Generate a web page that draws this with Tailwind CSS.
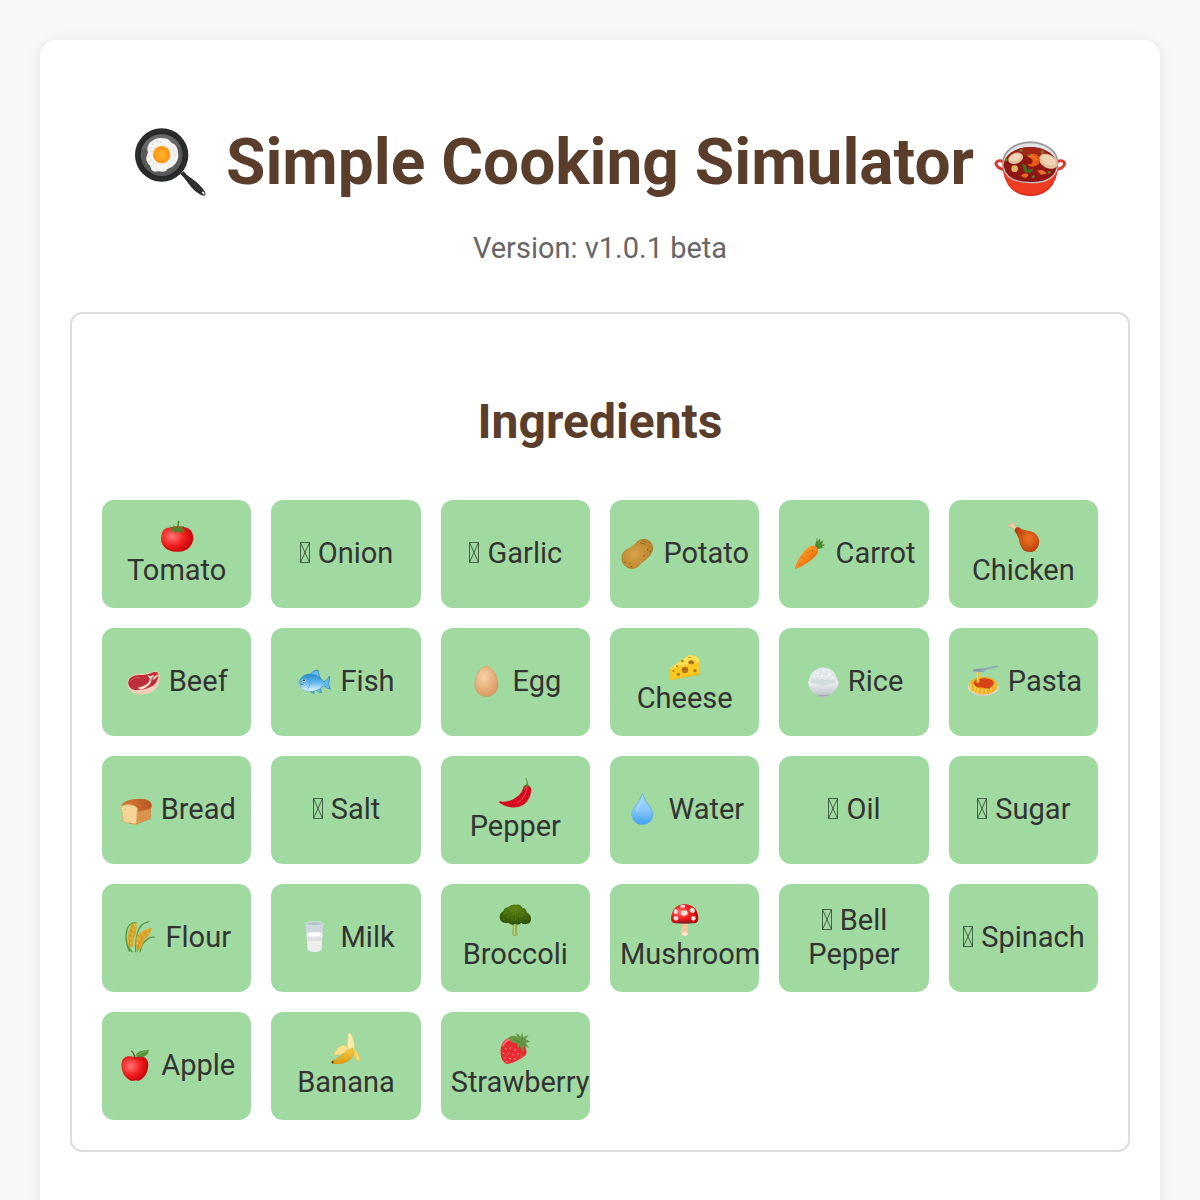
<!DOCTYPE html>
<html lang="en">
<head>
  <meta charset="UTF-8" />
  <meta name="viewport" content="width=device-width, initial-scale=1.0" />
  <title>Simple Cooking Simulator</title>
  <script src="https://cdn.jsdelivr.net/npm/@tailwindcss/browser@4"></script>
</head>
<body class="bg-[#f8f8f8] p-10 font-['Roboto',sans-serif] text-[#333333]">

  <!-- SHARED GRADIENTS AND THE BLANK GLYPH -->
  <svg class="absolute h-0 w-0" aria-hidden="true">
    <defs>
      <radialGradient id="red" cx=".35" cy=".4" r=".7"><stop offset="0" stop-color="#ff7775" /><stop offset=".55" stop-color="#ee1b1b" /><stop offset="1" stop-color="#bd0008" /></radialGradient>
      <radialGradient id="yolk"><stop offset="0" stop-color="#ffb52b" /><stop offset="1" stop-color="#ff9411" /></radialGradient>
      <radialGradient id="potato" cx=".4" cy=".5" r=".6"><stop offset="0" stop-color="#d6a24a" /><stop offset="1" stop-color="#b9822b" /></radialGradient>
      <linearGradient id="carrot" x1="0" y1="0" x2="1" y2="1"><stop offset=".3" stop-color="#ff9b24" /><stop offset=".8" stop-color="#e4650c" /></linearGradient>
      <radialGradient id="leg" cx=".55" cy=".45" r=".6"><stop offset="0" stop-color="#ee7524" /><stop offset="1" stop-color="#b63c08" /></radialGradient>
      <linearGradient id="fish" x1="0" y1="0" x2="0" y2="1"><stop offset="0" stop-color="#2589cf" /><stop offset=".5" stop-color="#62b9ef" /><stop offset="1" stop-color="#eefaff" /></linearGradient>
      <radialGradient id="egg" cx=".4" cy=".35" r=".7"><stop offset="0" stop-color="#f9d0a3" /><stop offset="1" stop-color="#d99760" /></radialGradient>
      <linearGradient id="bowl" x1="0" y1="0" x2="0" y2="1"><stop offset="0" stop-color="#f1f2f5" /><stop offset="1" stop-color="#b8bcc3" /></linearGradient>
      <linearGradient id="drop" x1="0" y1="0" x2="0" y2="1"><stop offset="0" stop-color="#a3d5fa" /><stop offset=".5" stop-color="#8dcbfb" /><stop offset="1" stop-color="#429fee" /></linearGradient>
      <radialGradient id="broccoli" cx=".5" cy=".2" r=".8"><stop offset="0" stop-color="#628412" /><stop offset="1" stop-color="#2d5108" /></radialGradient>
      <linearGradient id="banana" x1="0" y1="0" x2="0" y2="1"><stop offset="0" stop-color="#f8cc3f" /><stop offset="1" stop-color="#dc9b13" /></linearGradient>
      <linearGradient id="crust" x1="0" y1="0" x2="1" y2="0"><stop offset="0" stop-color="#d47d3b" /><stop offset="1" stop-color="#b95320" /></linearGradient>
      <symbol id="blank" viewBox="0 0 12 21"><path d="M1.5 .5h9v20h-9zM1.5 .5l9 20M10.500 .5l-9 20" fill="none" stroke="#2f4430" stroke-width=".8" /></symbol>
    </defs>
  </svg>

  <main class="rounded-2xl bg-white px-[30px] pt-[83px] pb-20 text-center shadow-[0_4px_16px_rgba(0,0,0,0.1)]">
    <h1 class="text-[64px] leading-[80px] font-bold text-[#5a3e2b]">
      <svg class="inline-block h-[72px] w-20 align-[-14px]" viewBox="0 0 240 216" aria-hidden="true">
        <path d="M151 143l10-7q8 12 22 20 27 18 42 41 5 13-6 12-25-9-45-38-10-15-23-28z" fill="#2b2d2e" />
        <path d="M169 153q26 18 41 39" fill="none" stroke="#3f4243" stroke-width="2" />
        <ellipse cx="220" cy="201" rx="3" ry="5" fill="#fff" transform="rotate(-30 220 201)" />
        <circle cx="95" cy="87" r="80" fill="#252728" />
        <circle cx="95" cy="87" r="73" fill="none" stroke="#323536" stroke-width="3" />
        <circle cx="95" cy="87" r="63" fill="#59595a" />
        <path d="M36 68a63 63 0 0 1 116-8l-36 8z" fill="#777" opacity=".5" />
        <path d="M67 44q9-9 25-8 19 1 24 5 9 11 17 14 11 10 11 25 4 18-7 32-9 13-25 17-3 8-14 8-15-3-23 0-11-1-12-10-1-8-8-13-9-11-5-24 6-10 2-20 1-18 15-26z" fill="#f5f3f1" />
        <g fill="#a6a3a3">
          <circle cx="67" cy="54" r="1.500" /><circle cx="80" cy="47" r="1.500" /><circle cx="60" cy="64" r="1.500" /><circle cx="57" cy="89" r="1.500" /><circle cx="63" cy="101" r="1.500" /><circle cx="71" cy="113" r="1.500" /><circle cx="58" cy="108" r="1.500" /><circle cx="92" cy="48" r="1.500" /><circle cx="131" cy="73" r="1.500" /><circle cx="134" cy="87" r="1.500" /><circle cx="66" cy="76" r="1.500" />
        </g>
        <circle cx="95" cy="86" r="26" fill="url(#yolk)" />
      </svg>
      Simple Cooking Simulator
      <svg class="inline-block h-[72px] w-20 align-[-14px]" viewBox="3 3 240 216" aria-hidden="true">
        <path d="M44 109q-20-6-23 6 1 15 29 19M204 109q20-6 23 6-1 15-29 19" fill="none" stroke="#d83b2c" stroke-width="9" />
        <path d="M40 108q-1 59 30 86 23 19 54 19t54-19q31-27 30-86z" fill="#d92a1b" />
        <path d="M46 146q6 34 33 51 47 23 90-1 26-20 33-50-78 52-156 0z" fill="#f03c23" />
        <ellipse cx="124" cy="111" rx="84" ry="62" fill="#989b9c" />
        <ellipse cx="124" cy="114" rx="80" ry="59" fill="#e5e3e3" />
        <ellipse cx="124" cy="120" rx="80" ry="54" fill="#8d1615" />
        <path d="M54 100q26-33 68-33 44 0 71 32-34-10-66-8-40-1-73 9z" fill="#a42618" />
        <ellipse cx="80" cy="100" rx="23" ry="16" fill="#e4c2a0" transform="rotate(-22 80 100)" />
        <ellipse cx="79" cy="97" rx="17" ry="10" fill="#efd4b5" transform="rotate(-22 79 97)" />
        <ellipse cx="178" cy="109" rx="30" ry="20" fill="#e4c2a0" transform="rotate(28 178 109)" />
        <ellipse cx="179" cy="106" rx="23" ry="13" fill="#efd4b5" transform="rotate(28 179 106)" />
        <path d="M113 94q22-17 38 2 7 25-20 29-15-2-14-8 14 2 14-9-4-10-18-14z" fill="#e45b17" />
        <path d="M120 96q18-7 24 10" fill="none" stroke="#f5792a" stroke-width="4" />
        <circle cx="77" cy="131" r="10" fill="#dfb564" />
        <path d="M98 117l12 3 5 14 19-1-9 11-18-3z" fill="#41701c" />
        <path d="M95 153q15-15 24-3l-9 9zM145 138q17-9 28 8l-17 3z" fill="#e86c26" />
        <g fill="#658b26"><circle cx="97" cy="77" r="4" /><circle cx="160" cy="81" r="5" /><circle cx="52" cy="104" r="4" /><circle cx="133" cy="155" r="4" /><circle cx="118" cy="91" r="3" /><circle cx="181" cy="142" r="4" /></g>
        <path d="M43 127q9 45 81 46t81-46" fill="none" stroke="#c5bfbf" stroke-width="4" />
      </svg>
    </h1>
    <p class="mt-5 text-[29px] leading-[50px] text-[#666666]">Version: v1.0.1 beta</p>

    <!-- INGREDIENTS -->
    <section class="mt-[39px] rounded-xl border-2 border-[#dddddd] px-[30px] pt-[78px] pb-[30px]">
      <h2 class="text-[48px] leading-[60px] font-bold text-[#5a3e2b]">Ingredients</h2>
      <div class="mt-12 grid grid-cols-6 gap-5 text-[29px] leading-[34px]">
        <button class="h-[108px] rounded-xl bg-[#a1daa1] px-[10px] pb-[3px]">
          <svg class="inline-block h-8 w-9 align-[-6px]" viewBox="0 0 108 96" aria-hidden="true">
            <path d="M35 22Q8 22 6 53q0 25 20 36 29 13 57 0 20-12 20-37-2-28-29-31-20-5-39 1z" fill="url(#red)" />
            <path d="M57 2l4 1-2 19 17-4-8 8 15 8-18-2 3 9-13-8-7 10-2-10-16 3 11-8-10-9 14 4-3-9 12 10z" fill="#4b8428" />
          </svg>
          Tomato
        </button>
        <button class="h-[108px] rounded-xl bg-[#a1daa1] px-[10px] pb-[3px]"><svg class="inline-block h-[21px] w-3 align-baseline" aria-hidden="true"><use href="#blank" /></svg> Onion</button>
        <button class="h-[108px] rounded-xl bg-[#a1daa1] px-[10px] pb-[3px]"><svg class="inline-block h-[21px] w-3 align-baseline" aria-hidden="true"><use href="#blank" /></svg> Garlic</button>
        <button class="h-[108px] rounded-xl bg-[#a1daa1] px-[10px] pb-[3px]">
          <svg class="inline-block h-8 w-9 align-[-6px]" viewBox="0 0 108 96" aria-hidden="true">
            <path d="M54 12q18-12 35 0 14 13 8 31-5 13-22 27-13 8-18 16-15 14-34 6Q1 81 6 55q3-14 22-22 14-6 26-21z" fill="url(#potato)" stroke="#9b681b" />
            <path d="M60 17l16 4M67 11l11 5" stroke="#80551c" stroke-width="2" />
            <g fill="#79511b"><circle cx="83" cy="38" r="2" /><circle cx="72" cy="57" r="2" /><circle cx="15" cy="76" r="2" /><circle cx="29" cy="78" r="1.500" /><circle cx="34" cy="89" r="2" /><circle cx="91" cy="44" r="2" /></g>
          </svg>
          Potato
        </button>
        <button class="h-[108px] rounded-xl bg-[#a1daa1] px-[10px] pb-[3px]">
          <svg class="inline-block h-8 w-9 align-[-6px]" viewBox="0 0 108 96" aria-hidden="true">
            <path d="M68 30L75 3l3 14 6-14 2 14 9-9-5 15 8-2-9 9 8 2-21 5z" fill="#529332" />
            <path d="M71 30L82 7M73 32l17-20M75 33l22-9" stroke="#336e1d" stroke-width="2" />
            <path d="M50 30q14-9 24 1 9 9 0 22Q55 76 12 96q-5 0-3-5 14-40 41-61z" fill="url(#carrot)" />
            <path d="M40 44l9 6M28 60l8 5M61 61l-8-7M20 81l7 2" stroke="#d96a14" stroke-width="2" />
            <circle cx="61" cy="41" r="2" fill="#a04710" />
          </svg>
          Carrot
        </button>
        <button class="h-[108px] rounded-xl bg-[#a1daa1] px-[10px] pb-[3px]">
          <svg class="inline-block h-8 w-9 align-[-6px]" viewBox="0 0 108 96" aria-hidden="true">
            <path d="M9 16q1-7 9-4 5-9 10-1 3 8 15 17l-9 8Q25 23 15 22q-6-1-6-6z" fill="#edc8a6" stroke="#c69b77" />
            <path d="M35 22q10-1 14 6l24 5q24 4 30 29-1 27-22 34-22 1-29-9-10-15-11-31-6-15-12-22-1-9 6-12z" fill="url(#leg)" />
            <path d="M49 36q0 16 5 29" fill="none" stroke="#c04a10" stroke-width="3" />
          </svg>
          Chicken
        </button>

        <button class="h-[108px] rounded-xl bg-[#a1daa1] px-[10px] pb-[3px]">
          <svg class="inline-block h-8 w-9 align-[-6px]" viewBox="0 0 108 96" aria-hidden="true">
            <path d="M5 55q-1-22 28-28 27 1 40-5 9-3 18-3 12 3 9 23 2 29-31 43-27 7-46-1Q3 75 5 55z" fill="#f4ceb9" />
            <path d="M7 50q4-20 33-20 23 0 35-6 16-6 22 1 2 11-4 23-9 20-44 26-31 5-39-9-5-8-3-15z" fill="#bd303b" />
            <path d="M35 68q24-4 34-17l3-11-5-4-1-5 7 3 9-4 3 3-8 5-2 13q-8 17-32 23zM79 41q8-8 17-13l1 4-15 13z" fill="#fbe0cd" />
            <path d="M12 50q12-14 31-12" fill="none" stroke="#da6566" stroke-width="2" />
          </svg>
          Beef
        </button>
        <button class="h-[108px] rounded-xl bg-[#a1daa1] px-[10px] pb-[3px]">
          <svg class="inline-block h-8 w-9 align-[-6px]" viewBox="0 0 108 96" aria-hidden="true">
            <path d="M40 27q8-11 23-12l5 21 12 15q11-5 18-18 0 15-4 23l6 16q-11-1-20-10l-10 10 4 11q-12-1-15-8l-10 3 3 7q-12-1-13-10z" fill="#6abbe9" stroke="#207eb9" stroke-width="2" />
            <path d="M5 52q6-20 27-25 35-2 52 28-16 24-43 24-28 0-32-17l5-3z" fill="url(#fish)" stroke="#2b87bd" />
            <path d="M33 31q12 22-1 42" fill="none" stroke="#4b9ccd" stroke-width="2" />
            <circle cx="21" cy="46" r="5" fill="#fff" /><circle cx="21" cy="46" r="3" fill="#152c39" />
            <path d="M8 56q8 5 12 1" fill="none" stroke="#24648e" stroke-width="2" />
          </svg>
          Fish
        </button>
        <button class="h-[108px] rounded-xl bg-[#a1daa1] px-[10px] pb-[3px]">
          <svg class="inline-block h-8 w-9 align-[-6px]" viewBox="0 0 108 96" aria-hidden="true">
            <path d="M52 4c21 0 35 35 35 54s-14 37-35 37-35-17-35-37S31 4 52 4z" fill="url(#egg)" stroke="#bd8755" />
          </svg>
          Egg
        </button>
        <button class="h-[108px] rounded-xl bg-[#a1daa1] px-[10px] pb-[3px]">
          <svg class="inline-block h-8 w-9 align-[-6px]" viewBox="0 0 108 96" aria-hidden="true">
            <path d="M9 62L67 20q28 2 31 20v40L10 96z" fill="#e7b117" />
            <path d="M9 61L67 20q28 2 31 20z" fill="#ffe054" />
            <path d="M9 62l89-21v37L10 96z" fill="#fbc822" />
            <path d="M9 62l89-21" stroke="#fce56b" stroke-width="2" />
            <g fill="#b77918"><ellipse cx="73" cy="43" rx="9" ry="6" /><circle cx="54" cy="66" r="10" /><ellipse cx="46" cy="39" rx="5" ry="3" /><ellipse cx="67" cy="28" rx="4" ry="2" /><circle cx="84" cy="68" r="5" /><circle cx="34" cy="79" r="5" /><circle cx="19" cy="69" r="3" /><circle cx="30" cy="55" r="3" /></g>
            <path d="M47 68q4-7 11-4M65 45q6-5 12-3" fill="none" stroke="#925812" stroke-width="3" />
          </svg>
          Cheese
        </button>
        <button class="h-[108px] rounded-xl bg-[#a1daa1] px-[10px] pb-[3px]">
          <svg class="inline-block h-8 w-9 align-[-6px]" viewBox="0 0 108 96" aria-hidden="true">
            <path d="M11 51q3-38 44-44 39 5 43 44l-10 9H23z" fill="#e4e8eb" />
            <path d="M17 45l8-4 5 4 7-5 6 4 9-3 10 4 7-3 8 5 8-4 9 8-7 10H18z" fill="#d3dbdf" />
            <path d="M23 34l6-3M35 24l7 3M53 19l7-2M71 29l7-3M81 39l6-2M48 33l6-2" stroke="#f6f8fa" stroke-width="4" />
            <path d="M9 49q45 23 92 0-2 32-29 41v5q-17 3-34 0v-5Q11 80 9 49z" fill="url(#bowl)" />
            <path d="M38 90q17 4 34 0" fill="none" stroke="#979da5" stroke-width="2" />
          </svg>
          Rice
        </button>
        <button class="h-[108px] rounded-xl bg-[#a1daa1] px-[10px] pb-[3px]">
          <svg class="inline-block h-8 w-9 align-[-6px]" viewBox="0 0 108 96" aria-hidden="true">
            <ellipse cx="55" cy="68" rx="46" ry="26" fill="#c8ccc8" /><ellipse cx="55" cy="65" rx="45" ry="25" fill="#f3eee3" />
            <ellipse cx="55" cy="62" rx="43" ry="27" fill="#f3ae24" />
            <path d="M16 58q4 10 1 16m9-18q8 16 0 25m12-12q5 10-3 15m15-12q4 8 0 15m15-16q-6 9 1 13m13-19q-4 9 1 12m8-24q-2 8 3 12" fill="none" stroke="#ffdc62" stroke-width="4" />
            <path d="M26 57q-2-11 15-14 18-7 34 0 15 6 11 16-9 6-12 12-17 0-23-4-18 3-25-10z" fill="#d64518" />
            <path d="M30 15h13v38h-9l3-24z" fill="#f6b93d" />
            <path d="M36 17l3 34" stroke="#ffe48c" stroke-width="2" />
            <path d="M23 13l34-3L99 1l1 5-38 10-7 6-30-2z" fill="#8faab5" />
            <path d="M27 14l25 1" stroke="#6d8791" stroke-width="2" />
          </svg>
          Pasta
        </button>

        <button class="h-[108px] rounded-xl bg-[#a1daa1] px-[10px] pb-[3px]">
          <svg class="inline-block h-8 w-9 align-[-6px]" viewBox="0 0 108 96" aria-hidden="true">
            <path d="M10 38q6-14 35-19 34-5 49 5 13 12 5 23l-2 31-42 16-20-1z" fill="#c86a2c" />
            <path d="M21 36q7-14 27-16 33-4 45 5 13 10 2 20l-36 8q0-12-38-17z" fill="url(#crust)" />
            <path d="M55 57l44-9-2 29-43 17z" fill="#d9934f" />
            <path d="M12 38q19-7 38 1 13 6 7 18l-2 37-40-8-2-28q-9-12-1-20z" fill="#f3d696" stroke="#dca65b" stroke-width="2" />
            <path d="M21 49v2M18 76v2" stroke="#bd9142" stroke-width="3" />
          </svg>
          Bread
        </button>
        <button class="h-[108px] rounded-xl bg-[#a1daa1] px-[10px] pb-[3px]"><svg class="inline-block h-[21px] w-3 align-baseline" aria-hidden="true"><use href="#blank" /></svg> Salt</button>
        <button class="h-[108px] rounded-xl bg-[#a1daa1] px-[10px] pb-[3px]">
          <svg class="inline-block h-8 w-9 align-[-6px]" viewBox="0 0 108 96" aria-hidden="true">
            <path d="M78 37q2-10 11-11 13 3 14 16-2 28-23 44-33 19-71-4-4-3-1-6 16 4 38-5 27-13 32-34z" fill="#d50c20" />
            <path d="M82 40q4-7 8-6-2 28-29 47" fill="none" stroke="#ef4b57" stroke-width="3" />
            <path d="M84 7q8-1 9 20l8 7-10-3-10 4 7-9Q91 15 84 7z" fill="#568b31" />
          </svg>
          Pepper
        </button>
        <button class="h-[108px] rounded-xl bg-[#a1daa1] px-[10px] pb-[3px]">
          <svg class="inline-block h-8 w-9 align-[-6px]" viewBox="0 0 108 96" aria-hidden="true">
            <path d="M52 2q8 23 23 40 9 14 9 23-3 28-32 30-28-2-32-30 0-10 9-23Q44 25 52 2z" fill="url(#drop)" stroke="#5aa9df" stroke-width="2" />
            <path d="M51 23Q36 42 37 56" fill="none" stroke="#bce2ff" stroke-width="5" opacity=".6" />
          </svg>
          Water
        </button>
        <button class="h-[108px] rounded-xl bg-[#a1daa1] px-[10px] pb-[3px]"><svg class="inline-block h-[21px] w-3 align-baseline" aria-hidden="true"><use href="#blank" /></svg> Oil</button>
        <button class="h-[108px] rounded-xl bg-[#a1daa1] px-[10px] pb-[3px]"><svg class="inline-block h-[21px] w-3 align-baseline" aria-hidden="true"><use href="#blank" /></svg> Sugar</button>

        <button class="h-[108px] rounded-xl bg-[#a1daa1] px-[10px] pb-[3px]">
          <svg class="inline-block h-8 w-9 align-[-6px]" viewBox="0 0 108 96" aria-hidden="true">
            <path d="M32 94Q5 71 15 25 22 5 43 4M41 94Q38 46 54 18 64 5 82 2M54 94Q58 65 76 55 85 47 98 49M23 92Q11 66 12 45" fill="none" stroke="#579943" stroke-width="4" />
            <path d="M20 77Q13 47 23 23 29 5 42 3q5 14-1 33-9 21-9 42z" fill="#d7a629" />
            <path d="M47 91Q36 67 45 44 61 26 90 20q-2 12-13 28-12 7-15 25-6 12-15 18z" fill="#dba42a" />
            <path d="M29 22l9 8M24 34l9 7M20 48l9 7M19 61l9 6M36 10l5 8M58 37l9 10M73 28l5 12M47 51l11 9M44 66l10 6" stroke="#f0c848" stroke-width="4" stroke-dasharray="4 3" />
            <path d="M24 87Q18 48 34 12M46 94Q47 55 76 30" fill="none" stroke="#b38a26" stroke-width="1.500" />
          </svg>
          Flour
        </button>
        <button class="h-[108px] rounded-xl bg-[#a1daa1] px-[10px] pb-[3px]">
          <svg class="inline-block h-8 w-9 align-[-6px]" viewBox="0 0 108 96" aria-hidden="true">
            <path d="M26 7q26-12 53 0l-5 81q-22 12-43 0z" fill="#cbd7dc" />
            <ellipse cx="52" cy="8" rx="25" ry="6" fill="#b0c3c9" stroke="#e3e9ef" stroke-width="2" />
            <path d="M29 39q23-9 47 0l-3 48q-20 12-41 0z" fill="#eeeeef" />
            <ellipse cx="52" cy="39" rx="23" ry="6" fill="#fff" />
            <path d="M31 46q22 8 43 0v14H32z" fill="#dfdfe2" />
          </svg>
          Milk
        </button>
        <button class="h-[108px] rounded-xl bg-[#a1daa1] px-[10px] pb-[3px]">
          <svg class="inline-block h-8 w-9 align-[-6px]" viewBox="0 0 108 96" aria-hidden="true">
            <path d="M31 50l15 14q2 10-1 29 8 5 17 1-3-20 0-31l17-11-11-4-15 7-11-7z" fill="#99b75a" />
            <path d="M52 58v35" stroke="#c1d383" stroke-width="3" />
            <path d="M10 48q-7-17 9-27 3-10 15-12 9-10 24-7 12-2 18 9 12 1 13 14 14 7 13 22-2 13-13 12-7 4-16-2-9 8-18 2-10 7-21-3-18 3-24-8z" fill="url(#broccoli)" />
            <path d="M22 29l7-4M37 17l7 2M58 15l6-2M75 24l5 3M30 40l5 2M49 31l7-2M68 38l6-2M18 45l5 2M84 42l5 3M55 46l5-2" stroke="#7e9d24" stroke-width="3" stroke-dasharray="2 3" />
          </svg>
          Broccoli
        </button>
        <button class="h-[108px] rounded-xl bg-[#a1daa1] px-[10px] pb-[3px]">
          <svg class="inline-block h-8 w-9 align-[-6px]" viewBox="0 0 108 96" aria-hidden="true">
            <path d="M44 51h18q-1 18 2 35 0 9-11 10-11-1-12-10 4-15 3-35z" fill="#ecca9e" />
            <ellipse cx="53" cy="90" rx="9" ry="5" fill="#fae4d0" />
            <path d="M12 43Q15 2 53 1q39 2 41 42 0 15-13 15-26-9-57 0-12-1-12-15z" fill="url(#red)" />
            <path d="M22 57q31-13 63 0-32 4-63 0z" fill="#8d1f21" />
            <g fill="#fce1d7"><ellipse cx="52" cy="27" rx="10" ry="8" /><ellipse cx="26" cy="23" rx="6" ry="7" /><ellipse cx="76" cy="19" rx="7" ry="8" transform="rotate(-35 76 19)" /><circle cx="27" cy="43" r="7" /><circle cx="79" cy="43" r="7" /><ellipse cx="47" cy="7" rx="8" ry="4" /></g>
          </svg>
          Mushroom
        </button>
        <button class="h-[108px] rounded-xl bg-[#a1daa1] px-[10px] pb-[3px]"><svg class="inline-block h-[21px] w-3 align-baseline" aria-hidden="true"><use href="#blank" /></svg> Bell Pepper</button>
        <button class="h-[108px] rounded-xl bg-[#a1daa1] px-[10px] pb-[3px]"><svg class="inline-block h-[21px] w-3 align-baseline" aria-hidden="true"><use href="#blank" /></svg> Spinach</button>

        <button class="h-[108px] rounded-xl bg-[#a1daa1] px-[10px] pb-[3px]">
          <svg class="inline-block h-8 w-9 align-[-6px]" viewBox="0 0 108 96" aria-hidden="true">
            <path d="M50 25q11-5 23-3 17 5 18 25-1 28-19 43-9 8-19 4-11 4-20-2Q10 77 10 47q1-21 19-25 12-1 21 3z" fill="url(#red)" />
            <path d="M36 24q14 7 29-1l-13 7z" fill="#8d1510" />
            <path d="M50 27Q49 12 40 6" fill="none" stroke="#72512b" stroke-width="4" />
            <path d="M51 22Q59 2 93 3q-4 23-27 21-8-1-15-2z" fill="#559137" />
            <path d="M53 22Q68 9 88 5" fill="none" stroke="#90b760" stroke-width="2" />
          </svg>
          Apple
        </button>
        <button class="h-[108px] rounded-xl bg-[#a1daa1] px-[10px] pb-[3px]">
          <svg class="inline-block h-8 w-9 align-[-6px]" viewBox="0 0 108 96" aria-hidden="true">
            <path d="M57 56L60 7q5-9 10 0 12 23 8 47L65 63z" fill="#fae9a2" stroke="#e2c86b" />
            <path d="M67 8l-2 46" stroke="#fff4c3" stroke-width="3" />
            <path d="M62 50q-9-15-23-9Q24 49 16 69q23 2 43-10z" fill="#fae18d" stroke="#d4ad42" />
            <path d="M72 48q17 7 21 23 8 13-1 17-12-4-18-30z" fill="#f7d56c" stroke="#d6a939" />
            <path d="M58 55q7-5 15-5 8 21-8 34-20 15-50 11-6-4-2-9 23-8 45-31z" fill="url(#banana)" stroke="#bd8420" />
            <path d="M12 86q-4 6 2 9l4-7z" fill="#5c421b" />
          </svg>
          Banana
        </button>
        <button class="h-[108px] rounded-xl bg-[#a1daa1] px-[10px] pb-[3px]">
          <svg class="inline-block h-8 w-9 align-[-6px]" viewBox="0 0 108 96" aria-hidden="true">
            <path d="M15 36q11-23 38-18 31 9 36 42-1 12-21 22-22 13-37 14Q11 90 11 63q-1-15 4-27z" fill="#e92a30" />
            <path d="M18 40q9-18 28-18" fill="none" stroke="#fa6d6c" stroke-width="6" stroke-linecap="round" />
            <path d="M33 18q15-12 28-3l-4-13q9 4 13 12l6-13 2 15 17-8-9 14 14 7-14 4 11 15-16-5-2 17-11-19-5 8-3-16q-15 4-22-11z" fill="#679747" />
            <path d="M60 23l12 12 13 5M48 22l19 6M77 14l-4 16" fill="none" stroke="#4f8236" stroke-width="2" />
            <g fill="#ffd0b8"><circle cx="26" cy="50" r="2" /><circle cx="40" cy="48" r="2" /><circle cx="54" cy="54" r="2" /><circle cx="20" cy="64" r="2" /><circle cx="34" cy="65" r="2" /><circle cx="49" cy="68" r="2" /><circle cx="64" cy="66" r="2" /><circle cx="25" cy="78" r="2" /><circle cx="39" cy="80" r="2" /><circle cx="54" cy="80" r="2" /><circle cx="30" cy="89" r="2" /><circle cx="74" cy="72" r="2" /></g>
          </svg>
          Strawberry
        </button>
      </div>
    </section>
  </main>
</body>
</html>
